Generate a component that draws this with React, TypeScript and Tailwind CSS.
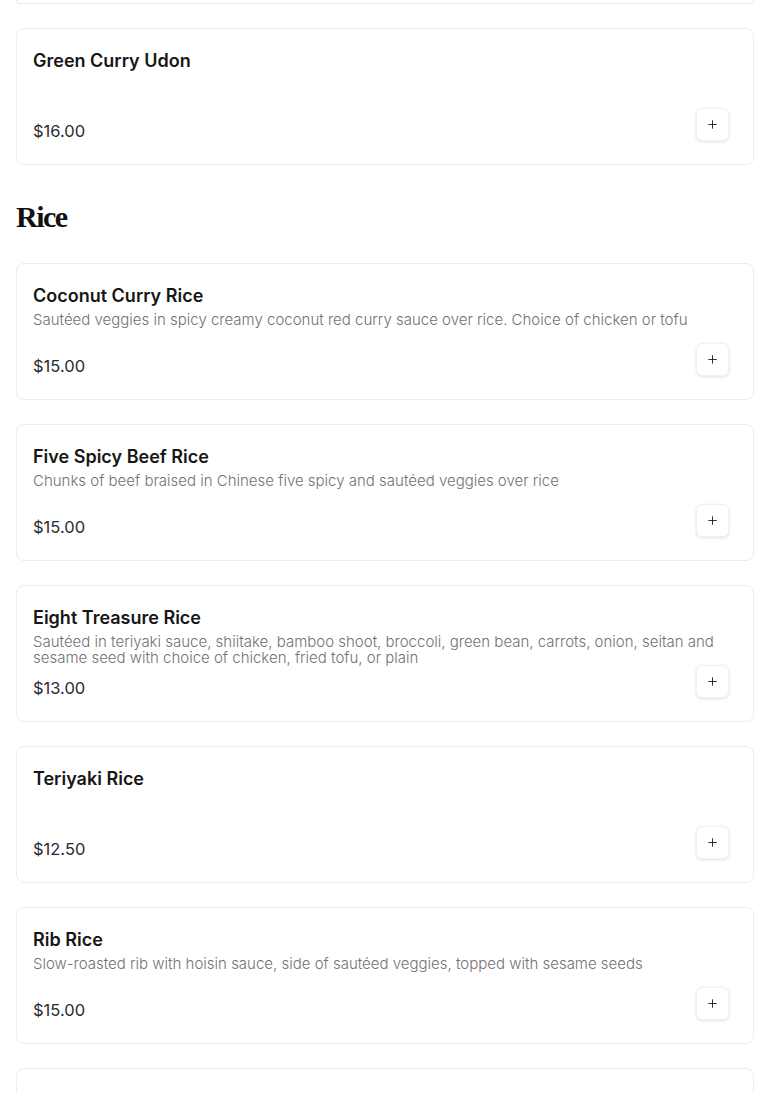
import { Plus } from 'lucide-react';

type Item = { name: string; description?: string; price: string };

const noodles: Item[] = [{ name: 'Green Curry Udon', price: '$16.00' }];

const rice: Item[] = [
    {
        name: 'Coconut Curry Rice',
        description: 'Sautéed veggies in spicy creamy coconut red curry sauce over rice. Choice of chicken or tofu',
        price: '$15.00',
    },
    {
        name: 'Five Spicy Beef Rice',
        description: 'Chunks of beef braised in Chinese five spicy and sautéed veggies over rice',
        price: '$15.00',
    },
    {
        name: 'Eight Treasure Rice',
        description:
            'Sautéed in teriyaki sauce, shiitake, bamboo shoot, broccoli, green bean, carrots, onion, seitan and sesame seed with choice of chicken, fried tofu, or plain',
        price: '$13.00',
    },
    { name: 'Teriyaki Rice', price: '$12.50' },
    {
        name: 'Rib Rice',
        description: 'Slow-roasted rib with hoisin sauce, side of sautéed veggies, topped with sesame seeds',
        price: '$15.00',
    },
];

function MenuCard({ item }: { item: Item }) {
    return (
        <div className="rounded-lg border border-[#ececec] bg-white pl-4 pr-6 pt-5 pb-[23px]">
            <h3 className="text-[18px] font-semibold leading-6 text-[#161616]">{item.name}</h3>
            <p className="mt-1 h-8 text-[15px] font-light leading-4 text-[#727272]">{item.description}</p>
            <div className="-mt-px flex items-end justify-between">
                <span className="text-[16.5px] leading-5 text-[#2b2b2b]">{item.price}</span>
                <button className="flex h-[33px] w-[33px] items-center justify-center rounded-md border border-[#f1f1f1] bg-white shadow-[0_1px_3px_rgba(0,0,0,0.12)]">
                    <Plus className="h-[13px] w-[13px] text-[#111]" strokeWidth={1.6} />
                </button>
            </div>
        </div>
    );
}

export default function App() {
    return (
        <div className="min-h-screen overflow-hidden bg-white font-['Inter',sans-serif]">
            <div className="px-4">
                {/* bottom of the previous card, scrolled mostly out of view */}
                <div className="h-1 rounded-b-lg border-x border-b border-[#ececec]" />

                <div className="mt-6 space-y-6">
                    {noodles.map((item) => (
                        <MenuCard key={item.name} item={item} />
                    ))}
                </div>

                <h2 className="mt-[34px] mb-[28px] font-['Liberation_Serif',serif] text-[30px] font-bold leading-9 tracking-[-0.05em] text-[#111]">
                    Rice
                </h2>

                <div className="space-y-6 pb-10">
                    {rice.map((item) => (
                        <MenuCard key={item.name} item={item} />
                    ))}
                    <div className="h-10 rounded-t-lg border-x border-t border-[#ececec]" />
                </div>
            </div>
        </div>
    );
}
